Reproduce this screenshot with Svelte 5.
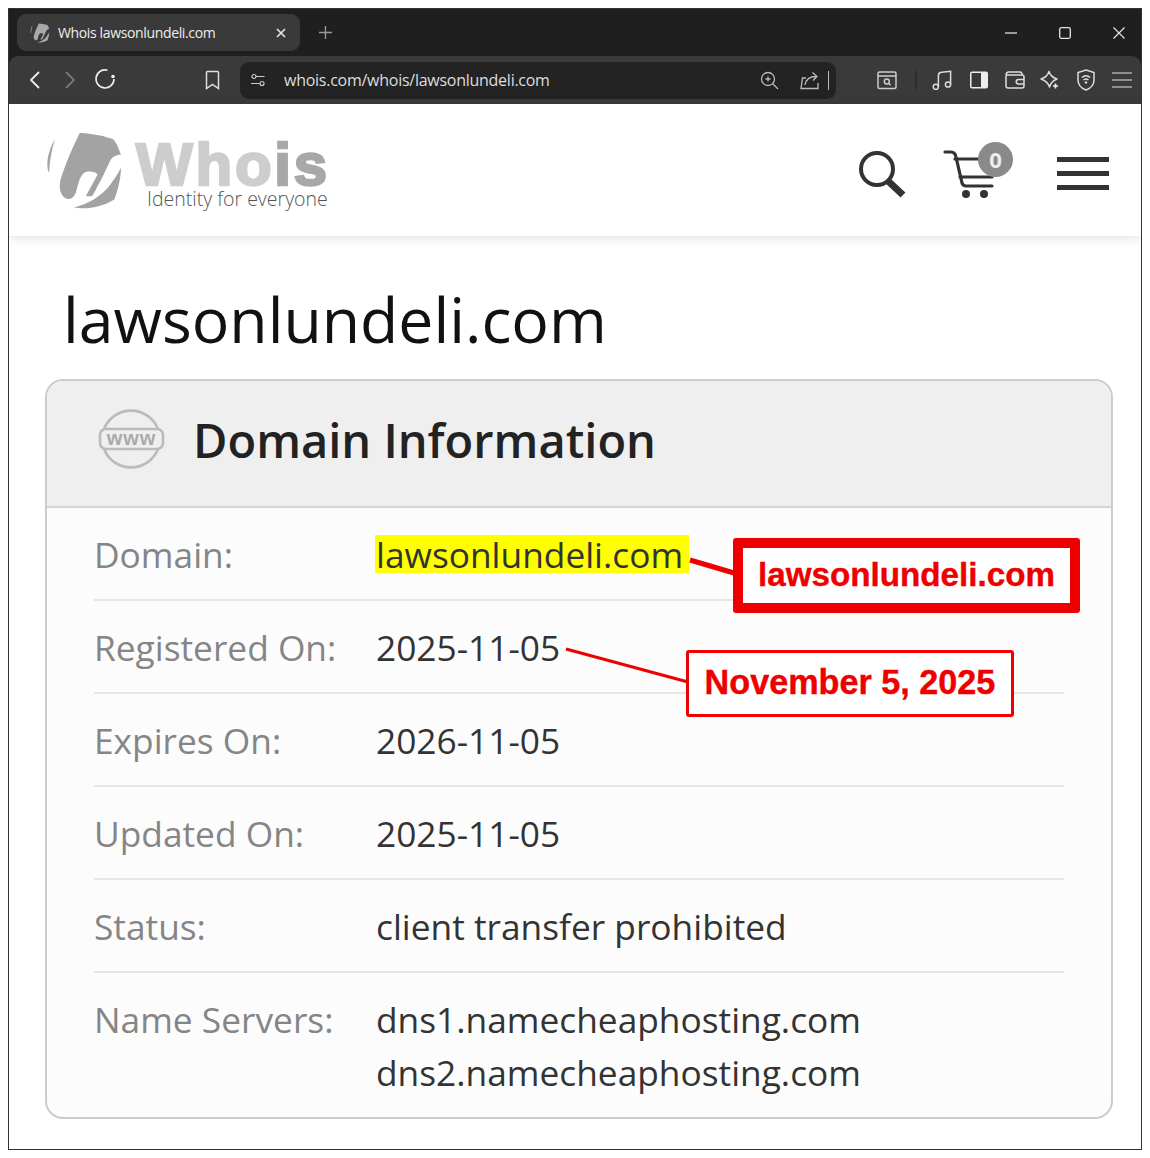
<script>
	const rows = [
		{ label: 'Registered On:', value: ['2025-11-05'] },
		{ label: 'Expires On:', value: ['2026-11-05'] },
		{ label: 'Updated On:', value: ['2025-11-05'] },
		{ label: 'Status:', value: ['client transfer prohibited'] },
		{ label: 'Name Servers:', value: ['dns1.namecheaphosting.com', 'dns2.namecheaphosting.com'] }
	];
</script>

{#snippet mark(cls, w, h, fill)}
	<svg class={cls} width={w} height={h} viewBox="20 10 232 236" {fill}>
		<path d="M122 15C160 18 200 25 222 35 235 50 240 70 245 80 225 82 215 90 210 105 200 125 190 150 175 175 165 195 160 205 155 205L140 205C150 185 165 160 175 140 170 130 145 128 135 135 122 145 118 165 110 195 102 213 85 220 72 205 60 190 60 170 66 150 80 105 100 60 122 15z" />
		<path d="M48 35C35 55 25 85 25 110 25 120 27 130 30 135 32 100 38 65 48 35z" />
		<path d="M105 238C130 232 170 218 205 180 222 160 235 140 245 120 245 150 235 190 225 215 205 228 175 238 150 240 130 242 115 241 105 238z" />
	</svg>
{/snippet}

<div class="frame">
	<div class="browser">
		<div class="tabstrip">
			<div class="tab">
				{@render mark('favicon', 20, 20, '#a8a8a8')}
				<span class="tab-title">Whois lawsonlundeli.com</span>
				<svg class="tab-close" width="10" height="10" viewBox="0 0 10 10"><path d="M1 1l8 8M9 1l-8 8" stroke="#e8e8e8" stroke-width="1.600" /></svg>
			</div>
			<svg class="new-tab" width="13" height="13" viewBox="0 0 13 13"><path d="M6.500 0v13M0 6.500h13" stroke="#9a9a9a" stroke-width="1.400" /></svg>
			<div class="window-btns">
				<svg width="12" height="12" viewBox="0 0 12 12"><path d="M0 6h12" stroke="#ddd" stroke-width="1.300" /></svg>
				<svg width="12" height="12" viewBox="0 0 12 12"><rect x=".7" y=".7" width="10.600" height="10.600" rx="1.500" fill="none" stroke="#e4e4e4" stroke-width="1.300" /></svg>
				<svg width="12" height="12" viewBox="0 0 12 12"><path d="M.5.500l11 11M11.500.500l-11 11" stroke="#e4e4e4" stroke-width="1.200" /></svg>
			</div>
		</div>
		<div class="toolbar">
			<svg class="nav-back" width="12" height="20" viewBox="0 0 12 20"><path d="M10 2 2 10l8 8" fill="none" stroke="#eee" stroke-width="1.800" /></svg>
			<svg class="nav-fwd" width="12" height="20" viewBox="0 0 12 20"><path d="M2 2l8 8-8 8" fill="none" stroke="#777" stroke-width="1.800" /></svg>
			<svg class="nav-reload" width="22" height="22" viewBox="0 0 22 22"><path d="M13.500 2.300A9 9 0 1 0 20 11" fill="none" stroke="#eee" stroke-width="1.600" /><circle cx="19" cy="8.500" r="1.800" fill="#eee" /></svg>
			<svg class="nav-bookmark" width="15" height="20" viewBox="0 0 15 20"><path d="M1.500 2.500a1 1 0 0 1 1-1h10a1 1 0 0 1 1 1v16l-6-4-6 4z" fill="none" stroke="#ddd" stroke-width="1.500" /></svg>
			<div class="urlbar">
				<svg class="url-tune" width="16" height="14" viewBox="0 0 16 14"><g fill="none" stroke="#ccc" stroke-width="1.200"><circle cx="4" cy="3.500" r="2" /><path d="M6 3.500h8.500M1 10.500h8.500" /><circle cx="12" cy="10.500" r="2" /></g></svg>
				<span class="url-text">whois.com/whois/lawsonlundeli.com</span>
				<svg class="url-zoom" width="20" height="20" viewBox="0 0 20 20"><g fill="none" stroke="#bbb" stroke-width="1.300"><circle cx="9" cy="9" r="6.500" /><path d="M13.800 13.800 19 19M6.500 9h5M9 6.500v5" /></g></svg>
				<svg class="url-share" width="20" height="20" viewBox="0 0 20 20"><g fill="none" stroke="#bbb" stroke-width="1.300"><path d="M6 8H2.500L1 18.500h17V13" /><path d="M5 15C6 9 10 6.500 16 6.500M12.500 2.500l4.500 4-4 4" /></g></svg>
				<span class="url-sep"></span>
			</div>
			<div class="tools">
				<svg class="tool-search" width="20" height="20" viewBox="0 0 20 20"><g fill="none" stroke="#ccc" stroke-width="1.500"><rect x="1" y="2" width="18" height="16.500" rx="1.500" /><path d="M1 6h18" /><circle cx="9.800" cy="11.500" r="2.500" /><path d="M11.600 13.300l2 2" /></g></svg>
				<span class="tool-sep"></span>
				<svg width="22" height="20" viewBox="0 0 22 20"><g fill="none" stroke="#ddd" stroke-width="1.500"><circle cx="3.800" cy="16.800" r="2.600" /><circle cx="16" cy="14.500" r="2.600" /><path d="M6.400 16.800V5.500Q6.400 2.500 9.500 2.300L18.600 1.300V14.500" /></g></svg>
				<svg width="20" height="20" viewBox="0 0 20 20"><rect x="1" y="1.500" width="18" height="17" rx="2" fill="#eee" /><rect x="2.500" y="3" width="9.500" height="14" fill="#3a3a3a" /></svg>
				<svg width="20" height="20" viewBox="0 0 20 20"><g fill="none" stroke="#ddd" stroke-width="1.500"><path d="M1 5.500V16a2 2 0 0 0 2 2h14a2 2 0 0 0 2-2V7a2 2 0 0 0-2-2H1" /><path d="M1 5.500Q1 2 4 2h11q2 0 2 3" /><path d="M19 9.500h-5.500a2 2 0 0 0 0 4.500H19" /></g></svg>
				<svg width="20" height="20" viewBox="0 0 20 20"><path d="M9 1.500C10 5 12 7.500 17 9 13 10.500 11 12.500 9.500 17 8 12.500 5.500 10.500 1 9 5.500 7.500 8 5 9 1.500z" fill="none" stroke="#ddd" stroke-width="1.500" stroke-linejoin="round" /><path d="M15.500 13.500v5M13 16h5" stroke="#eee" stroke-width="1.600" /></svg>
				<svg width="20" height="22" viewBox="0 0 20 22"><path d="M10 1 18 3.500V11c0 5-4 8.500-8 10-4-1.500-8-5-8-10V3.500z" fill="none" stroke="#ddd" stroke-width="1.500" /><path d="M5.800 8.500Q10 5 14.200 8.500M7.500 11Q10 9 12.500 11" fill="none" stroke="#ddd" stroke-width="1.300" /><circle cx="10" cy="13.500" r="1.200" fill="#ddd" /></svg>
				<svg width="20" height="18" viewBox="0 0 20 18"><path d="M0 2h20M0 9h20M0 16h20" stroke="#aaa" stroke-width="1.600" /></svg>
			</div>
		</div>
	</div>

	<header class="site-header">
		<div class="logo">
			{@render mark('logo-mark', 79, 79, '#a3a3a3')}
			<div class="logo-text">
				<div class="logo-word"><span class="who">Who</span><span class="is">is</span></div>
				<div class="logo-tag">Identity for everyone</div>
			</div>
		</div>
		<div class="header-icons">
			<svg class="icon-search" width="50" height="50" viewBox="0 0 50 50">
				<circle cx="20" cy="20" r="16" fill="none" stroke="#333" stroke-width="4" />
				<path d="M31 32 46 46" stroke="#333" stroke-width="7" />
			</svg>
			<div class="cart">
				<svg width="52" height="50" viewBox="0 0 52 50">
					<g fill="none" stroke="#333" stroke-width="3.200" stroke-linecap="round" stroke-linejoin="round">
						<path d="M2 2h6q4 0 5 5l6 26q1 3 4 3h26" />
						<path d="M12 9h38M17 27h32" />
					</g>
					<circle cx="23" cy="44" r="4" fill="#333" />
					<circle cx="41" cy="44" r="4" fill="#333" />
				</svg>
				<span class="cart-badge">0</span>
			</div>
			<div class="hamburger"><span></span><span></span><span></span></div>
		</div>
	</header>

	<main class="content">
		<h1>lawsonlundeli.com</h1>
		<section class="card">
			<div class="card-head">
				<svg class="www" width="68" height="60" viewBox="0 0 68 60">
					<g fill="none" stroke="#bbb" stroke-width="2.600">
						<path d="M6 20A29 29 0 0 1 60 20" />
						<path d="M6 40A29 29 0 0 0 60 40" />
						<rect x="2" y="20" width="63" height="20" rx="6" />
					</g>
					<text x="33.500" y="36" text-anchor="middle" class="www-text">www</text>
				</svg>
				<h2>Domain Information</h2>
			</div>
			<div class="card-body">
				<div class="row">
					<div class="label">Domain:</div>
					<div class="value"><mark>lawsonlundeli.com</mark></div>
				</div>
				{#each rows as row}
					<div class="row">
						<div class="label">{row.label}</div>
						<div class="value">
							{#each row.value as line}
								<div>{line}</div>
							{/each}
						</div>
					</div>
				{/each}
			</div>
		</section>
	</main>

	<svg class="leaders" width="1134" height="1142" viewBox="0 0 1134 1142">
		<path d="M682 552 726 565" stroke="#ee0000" stroke-width="5" />
		<path d="M558 641 680 674" stroke="#ee0000" stroke-width="3" />
	</svg>
	<div class="callout callout-big">lawsonlundeli.com</div>
	<div class="callout callout-small">November 5, 2025</div>
</div>

<style>
	:global(body) {
		margin: 0;
		background: #fff;
	}

	.frame {
		position: relative;
		box-sizing: border-box;
		width: 1134px;
		height: 1142px;
		margin: 8px;
		border: 1px solid #333;
		background: #fff;
		font-family: 'Open Sans', sans-serif;
		overflow: hidden;
	}

	/* browser chrome */
	.browser {
		height: 95px;
		background: #1f1f1f;
		font-family: 'Open Sans', sans-serif;
	}

	.tabstrip {
		display: flex;
		align-items: center;
		height: 47px;
		padding-left: 8px;
	}

	.tab {
		display: flex;
		align-items: center;
		box-sizing: border-box;
		width: 283px;
		height: 37px;
		padding: 0 14px 0 13px;
		background: #3a3a3a;
		border-radius: 9px;
	}

	.tab :global(.favicon) {
		flex: none;
		margin-right: 8px;
	}

	.tab-title {
		flex: 1;
		font-size: 14px;
		letter-spacing: -0.36px;
		color: #eee;
		white-space: nowrap;
	}

	.new-tab {
		margin-left: 19px;
	}

	.window-btns {
		display: flex;
		align-items: center;
		gap: 42px;
		margin-left: auto;
		padding-right: 16px;
	}

	.toolbar {
		display: flex;
		align-items: center;
		height: 48px;
		background: #3a3a3a;
		border-radius: 9px 9px 0 0;
		padding-left: 20px;
	}

	.nav-fwd {
		margin-left: 23px;
	}

	.nav-reload {
		margin-left: 18px;
		margin-bottom: 2px;
	}

	.nav-bookmark {
		margin-left: 89px;
	}

	.urlbar {
		display: flex;
		align-items: center;
		box-sizing: border-box;
		width: 596px;
		height: 37px;
		margin-left: 20px;
		padding-left: 10px;
		background: #232323;
		border-radius: 9px;
	}

	.url-text {
		margin-left: 18px;
		margin-bottom: 1px;
		font-size: 16px;
		letter-spacing: -0.26px;
		color: #ddd;
		white-space: nowrap;
	}

	.url-zoom {
		margin-left: auto;
	}

	.url-share {
		margin-left: 21px;
	}

	.url-sep {
		width: 1px;
		height: 19px;
		margin: 0 7px 0 8px;
		background: #bbb;
	}

	.tools {
		display: flex;
		align-items: center;
		margin-left: 41px;
		gap: 15.700px;
	}

	.tool-sep {
		width: 2px;
		height: 18px;
		margin: 0 0 0 2px;
		background: #2b2b2b;
	}

	.tools svg:nth-child(4) {
		margin-left: -1px;
	}

	/* site header */
	.site-header {
		position: relative;
		display: flex;
		align-items: center;
		justify-content: space-between;
		height: 132px;
		padding: 0 32px 0 36px;
		background: #fff;
		box-shadow: 0 2px 10px rgba(0, 0, 0, 0.12);
	}

	.logo {
		display: flex;
		align-items: flex-start;
	}

	.logo :global(.logo-mark) {
		flex: none;
	}

	.logo-text {
		margin-left: 12px;
		margin-top: 11px;
	}

	.logo-word {
		font-family: 'Liberation Sans', sans-serif;
		font-weight: 700;
		font-size: 60px;
		line-height: 45px;
		letter-spacing: 2.800px;
		-webkit-text-stroke: 2.500px currentColor;
	}

	.who {
		color: #cdcdcd;
	}

	.is {
		color: #a8a8a8;
	}

	.logo-tag {
		margin-top: 2px;
		margin-left: 11px;
		font-family: 'Open Sans', sans-serif;
		font-weight: 300;
		font-size: 19.500px;
		line-height: 20px;
		color: #555;
		white-space: nowrap;
	}

	.header-icons {
		display: flex;
		align-items: center;
		margin-top: 4px;
	}

	.icon-search {
		margin-top: 3px;
	}

	.cart {
		position: relative;
		margin-left: 36px;
		margin-top: 6px;
		width: 52px;
		height: 50px;
	}

	.cart-badge {
		position: absolute;
		top: -8px;
		right: -18px;
		width: 35px;
		height: 35px;
		border-radius: 50%;
		background: #8a8a8a;
		color: #eee;
		font-weight: 700;
		font-size: 22px;
		line-height: 35px;
		text-align: center;
	}

	.hamburger {
		display: flex;
		flex-direction: column;
		gap: 9px;
		width: 52px;
		margin-left: 62px;
		margin-top: 3px;
	}

	.hamburger span {
		height: 5px;
		background: #333;
	}

	/* content */
	.content {
		padding: 0 28px 0 36px;
	}

	h1 {
		margin: 0;
		padding: 41px 0 0 18px;
		height: 102px;
		font-weight: 400;
		font-size: 62.500px;
		line-height: 84px;
		color: #111;
	}

	.card {
		box-sizing: border-box;
		height: 740px;
		border: 2px solid #ccc;
		border-radius: 18px;
		overflow: hidden;
		background: #fcfcfc;
	}

	.card-head {
		display: flex;
		align-items: center;
		box-sizing: border-box;
		height: 127px;
		padding-left: 51px;
		background: #efefef;
		border-bottom: 2px solid #d4d4d4;
	}

	.www {
		margin-bottom: 10px;
	}

	.www-text {
		font-family: 'Liberation Sans', sans-serif;
		font-size: 20px;
		font-weight: 700;
		letter-spacing: 1px;
		fill: #aaa;
	}

	h2 {
		margin: 0 0 8px 27px;
		font-weight: 600;
		font-size: 47px;
		color: #222;
	}

	.card-body {
		padding: 0 47px;
	}

	.row {
		display: flex;
		box-sizing: border-box;
		min-height: 93px;
		padding-top: 23px;
		border-bottom: 2px solid #e6e6e6;
		font-size: 35.300px;
		line-height: 46px;
	}

	.row:last-child {
		border-bottom: 0;
		line-height: 53px;
		padding-top: 20px;
	}

	.label {
		flex: none;
		width: 282px;
		color: #858585;
	}

	.value {
		color: #333;
	}

	mark {
		display: inline-block;
		background: #ffff00;
		color: #333;
		height: 38px;
		line-height: 38px;
		margin: 4px 0 0 -1px;
		padding: 0 6px 0 1px;
		vertical-align: top;
	}

	/* annotations drawn over the page */
	.leaders {
		position: absolute;
		top: -1px;
		left: -1px;
		pointer-events: none;
	}

	.callout {
		position: absolute;
		box-sizing: border-box;
		display: flex;
		align-items: center;
		justify-content: center;
		padding-bottom: 2px;
		background: #fff;
		color: #ee0000;
		font-family: 'Liberation Sans', sans-serif;
		font-weight: 700;
		white-space: nowrap;
		-webkit-text-stroke: 0.400px #ee0000;
		border-style: solid;
		border-color: #ee0000;
		border-radius: 3px;
	}

	.callout-big {
		left: 724px;
		top: 529px;
		width: 347px;
		height: 75px;
		border-width: 10px;
		font-size: 33.200px;
	}

	.callout-small {
		left: 677px;
		top: 641px;
		width: 328px;
		height: 67px;
		border-width: 3px;
		font-size: 34.200px;
	}
</style>
